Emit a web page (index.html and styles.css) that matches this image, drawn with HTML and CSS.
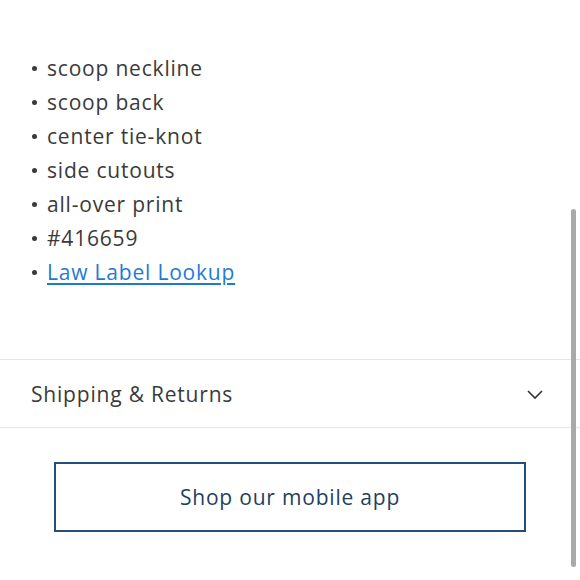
FILE: index.html
```html
<!DOCTYPE html>
<html>
<head>
<meta charset="utf-8">
<link rel="stylesheet" href="styles.css">
</head>
<body>
<div class="page">
  <ul class="details">
    <li>scoop neckline</li>
    <li>scoop back</li>
    <li>center tie-knot</li>
    <li>side cutouts</li>
    <li>all-over print</li>
    <li>#416659</li>
    <li><a href="#" class="link">Law Label Lookup</a></li>
  </ul>
  <div class="accordion">
    <span class="acc-title">Shipping &amp; Returns</span>
    <svg class="chev" width="18" height="12" viewBox="0 0 18 12"><path d="M2 3 L9 10 L16 3" fill="none" stroke="#333" stroke-width="1.6"/></svg>
  </div>
  <div class="cta-wrap">
    <a href="#" class="cta">Shop our mobile app</a>
  </div>
</div>
<div class="scrollbar"></div>
</body>
</html>
```
FILE: styles.css
```css
html, body { margin: 0; padding: 0; background: #fff; }
body { font-family: "Open Sans", Lato, sans-serif; color: #3a3a3a; width: 580px; height: 580px; overflow: hidden; position: relative; }
.page { padding-top: 51px; }
.details { list-style: none; margin: 0; padding: 0 0 0 32px; }
.details li { font-size: 21px; line-height: 34px; letter-spacing: 0.8px; display: flex; align-items: center; }
.details li::before { content: ""; width: 5px; height: 5px; border-radius: 50%; background: #3a3a3a; margin-right: 10px; flex: none; }
.link { color: #1f7ad4; text-decoration: underline; text-underline-offset: 3px; text-decoration-thickness: 2px; }
.accordion { margin-top: 70px; border-top: 1px solid #e6e6e6; border-bottom: 1px solid #e6e6e6; height: 67px; display: flex; align-items: center; justify-content: space-between; padding: 0 36px 0 31px; }
.acc-title { font-size: 21px; letter-spacing: 0.8px; color: #3a3a3a; }
.chev { display: block; }
.cta-wrap { padding: 34px 54px 0 54px; }
.cta { display: flex; align-items: center; justify-content: center; height: 66px; border: 2px solid #244f78; color: #1e3f5f; font-size: 21px; letter-spacing: 0.8px; text-decoration: none; }
.scrollbar { position: absolute; left: 571px; top: 209px; width: 5px; height: 358px; border-radius: 3px; background: #a9a9a9; }
```
